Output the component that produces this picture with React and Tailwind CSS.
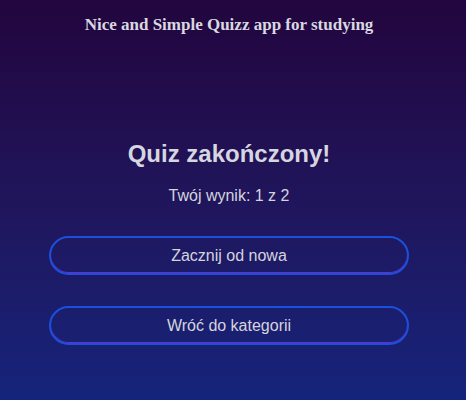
export default function App() {
  const btn = "w-[360px] h-[39px] rounded-full border-2 border-[#1a50dc] shadow-[inset_0_-1px_0_#6d2cc8] bg-transparent text-[16px] text-[#d4d4de]"
  return (
    <div className="min-h-[400px] w-full pr-[8px] bg-gradient-to-b from-[#22053e] to-[#14247b] flex flex-col items-center" style={{ fontFamily: '"Liberation Sans", Arial, sans-serif' }}>
      <h1 className="mt-[15px] text-[17px] font-bold text-[#d8d8e0] leading-[20px]" style={{ fontFamily: '"Liberation Serif", "Times New Roman", serif' }}>
        Nice and Simple Quizz app for studying
      </h1>
      <h2 className="mt-[105px] text-[24px] font-bold text-[#d6d6e0] leading-[28px]">Quiz zakończony!</h2>
      <p className="mt-[18px] text-[16px] text-[#d4d4de] leading-[20px]">Twój wynik: 1 z 2</p>
      <div className="mt-[30px] flex flex-col gap-[31px]">
        <button className={btn}>Zacznij od nowa</button>
        <button className={btn}>Wróć do kategorii</button>
      </div>
    </div>
  )
}
